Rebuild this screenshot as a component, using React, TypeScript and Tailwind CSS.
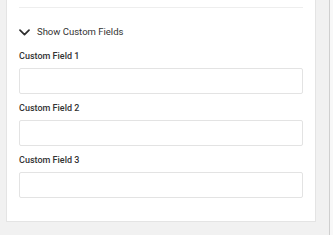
import React from 'react';

function Chevron() {
  return (
    <svg width="11" height="7" viewBox="0 0 11 7" fill="none" className="shrink-0">
      <path d="M1 1.2L5.5 5.6L10 1.2" stroke="#2e2e2e" strokeWidth="1.7" strokeLinecap="round" strokeLinejoin="round" />
    </svg>
  );
}

function Field({ label }: { label: string }) {
  return (
    <div className="mt-[8px] flex flex-col">
      <label className="h-[12px] leading-[12px] text-[9px] font-medium text-[#333]">{label}</label>
      <input
        type="text"
        className="mt-[6px] h-[26px] w-full rounded-[2px] border border-[#e3e3e3] bg-white px-2 text-[10px] outline-none"
      />
    </div>
  );
}

export default function App() {
  return (
    <div
      className="flex h-[235px] w-[333px] bg-[#f1f1f1]"
      style={{ fontFamily: 'Roboto, "Liberation Sans", sans-serif' }}
    >
      <div className="w-[6px] shrink-0" />
      <div className="flex h-[222px] w-[310px] shrink-0 flex-col border-x border-b border-[#e4e4e4] bg-white px-[12px] pt-[7px] pb-[23px]">
        <div className="h-px w-full bg-[#eeeeee]" />
        <button className="mt-[18px] flex h-[12px] items-center gap-[7px] text-left">
          <Chevron />
          <span className="text-[9.5px] leading-[12px] text-[#333]">Show Custom Fields</span>
        </button>
        <div className="mt-[4px] flex flex-col">
          <Field label="Custom Field 1" />
          <Field label="Custom Field 2" />
          <Field label="Custom Field 3" />
        </div>
      </div>
      <div className="flex-1" />
      <div className="flex w-[4px] shrink-0">
        <div className="w-px bg-[#cfcfcf]" />
        <div className="flex-1 bg-[#f8f8f8]" />
      </div>
    </div>
  );
}
